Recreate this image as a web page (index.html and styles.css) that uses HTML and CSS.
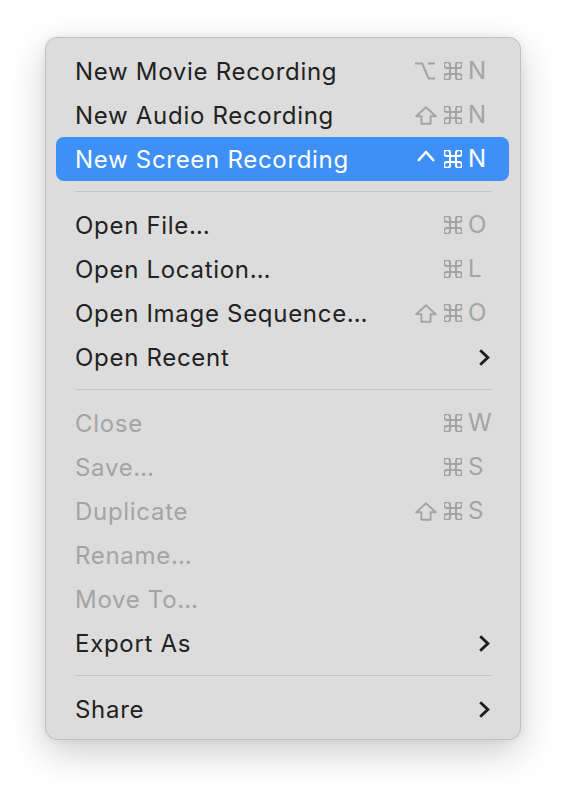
FILE: index.html
```html
<!DOCTYPE html>
<html>
<head>
<meta charset="utf-8">
<link rel="stylesheet" href="styles.css">
</head>
<body>
<div class="page">
  <div class="menu">
    <div class="item">
      <span class="label">New Movie Recording</span>
      <span class="sc">
        <svg class="mod opt" width="20" height="18" viewBox="0 0 20 18"><path d="M0 1.5 H7.2 L13.6 16.5 H20 M12.8 1.5 H20" fill="none" stroke="currentColor" stroke-width="2"/></svg>
        <svg class="mod cmd" width="18" height="18" viewBox="3 3 18 18"><path d="M15 6v12a3 3 0 1 0 3-3H6a3 3 0 1 0 3 3V6a3 3 0 1 0-3 3h12a3 3 0 1 0-3-3" fill="none" stroke="currentColor" stroke-width="2" stroke-linejoin="round"/></svg>
        <span class="key">N</span>
      </span>
    </div>
    <div class="item">
      <span class="label">New Audio Recording</span>
      <span class="sc">
        <svg class="mod shift" width="22" height="19" viewBox="0 0 22 19"><path d="M11 1.3 L20.8 10.3 H15.6 V17.8 H6.4 V10.3 H1.2 Z" fill="none" stroke="currentColor" stroke-width="1.9" stroke-linejoin="round"/></svg>
        <svg class="mod cmd" width="18" height="18" viewBox="3 3 18 18"><path d="M15 6v12a3 3 0 1 0 3-3H6a3 3 0 1 0 3 3V6a3 3 0 1 0-3 3h12a3 3 0 1 0-3-3" fill="none" stroke="currentColor" stroke-width="2" stroke-linejoin="round"/></svg>
        <span class="key">N</span>
      </span>
    </div>
    <div class="item active">
      <span class="label">New Screen Recording</span>
      <span class="sc">
        <svg class="mod ctrl" width="18" height="18" viewBox="0 0 18 18"><path d="M1.8 11 L9 3 L16.2 11" fill="none" stroke="currentColor" stroke-width="2.6" stroke-linecap="round" stroke-linejoin="round"/></svg>
        <svg class="mod cmd" width="18" height="18" viewBox="3 3 18 18"><path d="M15 6v12a3 3 0 1 0 3-3H6a3 3 0 1 0 3 3V6a3 3 0 1 0-3 3h12a3 3 0 1 0-3-3" fill="none" stroke="currentColor" stroke-width="2" stroke-linejoin="round"/></svg>
        <span class="key">N</span>
      </span>
    </div>
    <div class="sep"></div>
    <div class="item">
      <span class="label">Open File…</span>
      <span class="sc">
        <svg class="mod cmd" width="18" height="18" viewBox="3 3 18 18"><path d="M15 6v12a3 3 0 1 0 3-3H6a3 3 0 1 0 3 3V6a3 3 0 1 0-3 3h12a3 3 0 1 0-3-3" fill="none" stroke="currentColor" stroke-width="2" stroke-linejoin="round"/></svg>
        <span class="key">O</span>
      </span>
    </div>
    <div class="item">
      <span class="label">Open Location…</span>
      <span class="sc">
        <svg class="mod cmd" width="18" height="18" viewBox="3 3 18 18"><path d="M15 6v12a3 3 0 1 0 3-3H6a3 3 0 1 0 3 3V6a3 3 0 1 0-3 3h12a3 3 0 1 0-3-3" fill="none" stroke="currentColor" stroke-width="2" stroke-linejoin="round"/></svg>
        <span class="key">L</span>
      </span>
    </div>
    <div class="item">
      <span class="label">Open Image Sequence…</span>
      <span class="sc">
        <svg class="mod shift" width="22" height="19" viewBox="0 0 22 19"><path d="M11 1.3 L20.8 10.3 H15.6 V17.8 H6.4 V10.3 H1.2 Z" fill="none" stroke="currentColor" stroke-width="1.9" stroke-linejoin="round"/></svg>
        <svg class="mod cmd" width="18" height="18" viewBox="3 3 18 18"><path d="M15 6v12a3 3 0 1 0 3-3H6a3 3 0 1 0 3 3V6a3 3 0 1 0-3 3h12a3 3 0 1 0-3-3" fill="none" stroke="currentColor" stroke-width="2" stroke-linejoin="round"/></svg>
        <span class="key">O</span>
      </span>
    </div>
    <div class="item sub">
      <span class="label">Open Recent</span>
      <svg class="chev" width="12" height="19" viewBox="0 0 12 19"><path d="M2.2 2.3 L9.8 9.5 L2.2 16.7" fill="none" stroke="currentColor" stroke-width="2.9" stroke-linejoin="miter"/></svg>
    </div>
    <div class="sep"></div>
    <div class="item disabled">
      <span class="label">Close</span>
      <span class="sc">
        <svg class="mod cmd" width="18" height="18" viewBox="3 3 18 18"><path d="M15 6v12a3 3 0 1 0 3-3H6a3 3 0 1 0 3 3V6a3 3 0 1 0-3 3h12a3 3 0 1 0-3-3" fill="none" stroke="currentColor" stroke-width="2" stroke-linejoin="round"/></svg>
        <span class="key">W</span>
      </span>
    </div>
    <div class="item disabled">
      <span class="label">Save…</span>
      <span class="sc">
        <svg class="mod cmd" width="18" height="18" viewBox="3 3 18 18"><path d="M15 6v12a3 3 0 1 0 3-3H6a3 3 0 1 0 3 3V6a3 3 0 1 0-3 3h12a3 3 0 1 0-3-3" fill="none" stroke="currentColor" stroke-width="2" stroke-linejoin="round"/></svg>
        <span class="key">S</span>
      </span>
    </div>
    <div class="item disabled">
      <span class="label">Duplicate</span>
      <span class="sc">
        <svg class="mod shift" width="22" height="19" viewBox="0 0 22 19"><path d="M11 1.3 L20.8 10.3 H15.6 V17.8 H6.4 V10.3 H1.2 Z" fill="none" stroke="currentColor" stroke-width="1.9" stroke-linejoin="round"/></svg>
        <svg class="mod cmd" width="18" height="18" viewBox="3 3 18 18"><path d="M15 6v12a3 3 0 1 0 3-3H6a3 3 0 1 0 3 3V6a3 3 0 1 0-3 3h12a3 3 0 1 0-3-3" fill="none" stroke="currentColor" stroke-width="2" stroke-linejoin="round"/></svg>
        <span class="key">S</span>
      </span>
    </div>
    <div class="item disabled"><span class="label">Rename…</span></div>
    <div class="item disabled"><span class="label">Move To…</span></div>
    <div class="item sub">
      <span class="label">Export As</span>
      <svg class="chev" width="12" height="19" viewBox="0 0 12 19"><path d="M2.2 2.3 L9.8 9.5 L2.2 16.7" fill="none" stroke="currentColor" stroke-width="2.9" stroke-linejoin="miter"/></svg>
    </div>
    <div class="sep"></div>
    <div class="item sub">
      <span class="label">Share</span>
      <svg class="chev" width="12" height="19" viewBox="0 0 12 19"><path d="M2.2 2.3 L9.8 9.5 L2.2 16.7" fill="none" stroke="currentColor" stroke-width="2.9" stroke-linejoin="miter"/></svg>
    </div>
  </div>
</div>
</body>
</html>
```
FILE: styles.css
```css
html, body {
  margin: 0;
  padding: 0;
  background: #ffffff;
}
.page {
  padding: 37px 0 54px 45px;
}
.menu {
  box-sizing: border-box;
  width: 476px;
  height: 703px;
  padding: 11px 11px 8px 10px;
  background: #dcdcdc;
  border: 1px solid #bfbfbf;
  border-radius: 12px;
  box-shadow: 0 12px 36px rgba(0, 0, 0, 0.2), 0 0 8px rgba(0, 0, 0, 0.06);
  font-family: Inter, "Noto Sans", sans-serif;
  color: #222222;
}
.item {
  height: 44px;
  display: flex;
  align-items: center;
  padding: 0 14px 0 19px;
  border-radius: 8px;
  font-size: 24px;
}
.label {
  flex: 1;
  white-space: nowrap;
  letter-spacing: 0.7px;
}
.sc {
  display: flex;
  align-items: center;
  color: #a4a4a4;
}
.mod {
  display: block;
  flex: none;
}
.opt {
  margin-right: 9px;
}
.shift {
  margin-right: 7px;
}
.ctrl {
  margin-right: 9px;
  margin-top: -2px;
}
.cmd {
  margin-right: 6px;
}
.key {
  width: 27px;
  font-size: 24px;
  line-height: 1;
}
.active {
  background: #3e90f7;
  color: #ffffff;
}
.active .sc {
  color: #ffffff;
}
.disabled {
  color: #a4a4a4;
}
.sub {
  padding-right: 19px;
}
.chev {
  display: block;
  color: #1e1e1e;
}
.sep {
  height: 1px;
  background: #c4c4c4;
  margin: 10px 17px 11px 19px;
}
```
